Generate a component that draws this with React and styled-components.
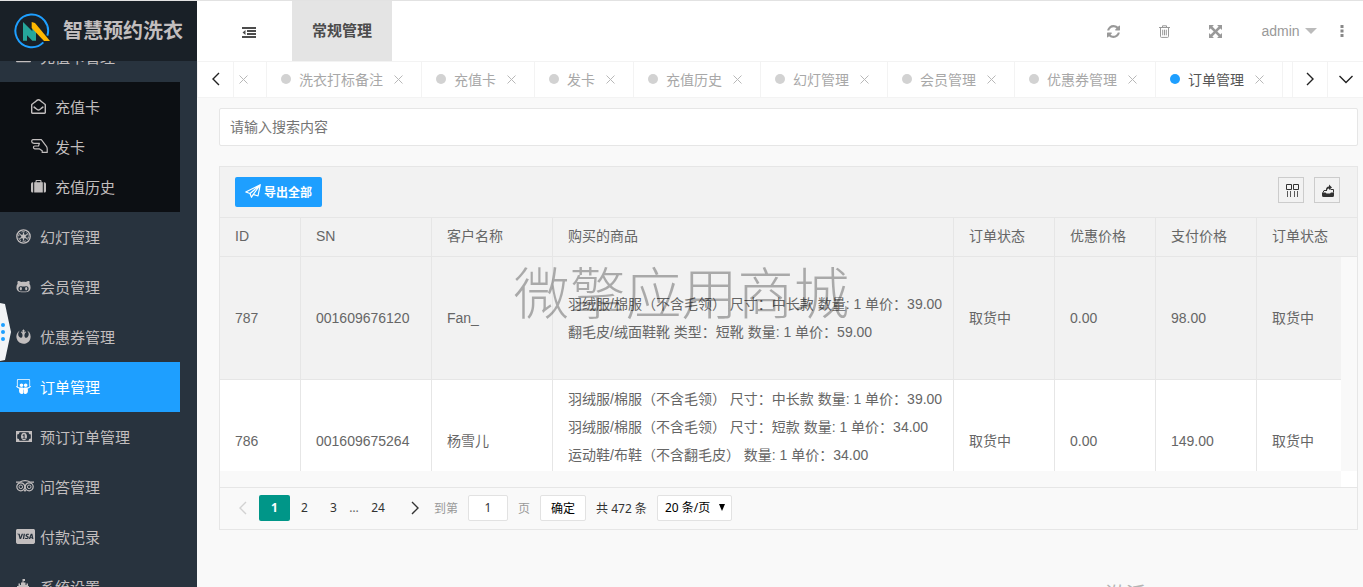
import styled, { createGlobalStyle, css } from "styled-components";
import { useEffect, useRef, useState } from "react";
import {
  FaRegEnvelopeOpen,
  FaGithubAlt,
  FaRebel,
  FaSlideshare,
  FaCcVisa,
} from "react-icons/fa";

const GlobalStyle = createGlobalStyle`
  * {
    box-sizing: border-box;
  }

  body {
    margin: 0;
    overflow: hidden;
    background: #f9f9f9;
    color: #666;
    font-family: "Liberation Sans", Arial, "Noto Sans CJK SC", sans-serif;
    font-size: 14px;
  }

  button, input, select {
    font-family: inherit;
  }

  a {
    color: inherit;
    text-decoration: none;
  }
`;

const Page = styled.div`
  position: relative;
  display: flex;
  height: 100vh;
  border-top: 1px solid #e2e2e2;
  overflow: hidden;
`;

/* Sidebar */
const Sidebar = styled.aside`
  display: flex;
  flex-direction: column;
  flex: none;
  width: 197px;
  background: #28333e;
`;

const Brand = styled.div`
  display: flex;
  align-items: center;
  flex: none;
  gap: 12px;
  height: 60px;
  padding-left: 13px;
  background: #192027;
  color: #c2bebe;
`;

const BrandName = styled.h1`
  margin: 0;
  font-size: 20px;
  line-height: 30px;
  font-weight: 700;
  white-space: nowrap;
`;

const MenuScroll = styled.nav`
  flex: 1;
  min-height: 0;
  overflow: hidden;
`;

const Menu = styled.ul`
  width: 180px;
  margin: 0;
  padding: 0;
  list-style: none;
`;

const SubMenu = styled(Menu)`
  padding: 5px 0;
  background: #0c0f13;
`;

const MenuLink = styled.a`
  display: flex;
  align-items: center;
  height: ${(p) => (p.$sub ? "40px" : "50px")};
  padding-bottom: 2px;
  padding-left: ${(p) => (p.$sub ? "31px" : "16px")};
  background: ${(p) => (p.$active ? "#1e9fff" : "transparent")};
  color: ${(p) => (p.$active ? "#fff" : "#c2bebe")};
  font-size: 15px;
  white-space: nowrap;
`;

const MenuIcon = styled.span`
  display: flex;
  flex: none;
  width: 24px;
`;

const Handle = styled.button`
  position: absolute;
  left: 0;
  top: 302px;
  width: 11px;
  height: 58px;
  padding: 0;
  border: 0;
  background: none;

  svg {
    display: block;
  }
`;

/* Right side */
const Content = styled.div`
  display: flex;
  flex-direction: column;
  flex: 1;
  min-width: 0;
`;

const Header = styled.header`
  display: flex;
  justify-content: space-between;
  flex: none;
  height: 60px;
  background: #fff;
`;

const HeaderGroup = styled.div`
  display: flex;
  align-items: center;
  padding-right: ${(p) => (p.$right ? "16px" : "0")};
`;

const FoldButton = styled.button`
  display: flex;
  align-items: center;
  justify-content: center;
  width: 95px;
  height: 60px;
  padding: 2px 0 0 8px;
  border: 0;
  background: none;
  color: #4c4c4c;
`;

const ModuleLink = styled.a`
  height: 60px;
  padding: 0 20px;
  background: #e4e4e4;
  color: #4c4c4c;
  font-size: 15px;
  line-height: 60px;
  font-weight: 700;
`;

const HeaderButton = styled.button`
  display: flex;
  align-items: center;
  justify-content: center;
  width: ${(p) => p.$width || "51px"};
  height: 60px;
  padding: 0;
  gap: 5px;
  border: 0;
  background: none;
  color: #999;
  font-size: 14px;
`;

const TabBar = styled.div`
  display: flex;
  flex: none;
  height: 37px;
  border-top: 1px solid #f3f3f3;
  border-bottom: 1px solid #f3f3f3;
  border-left: 1px solid #f3f3f3;
  background: #fff;
`;

const TabArrow = styled.button`
  display: flex;
  align-items: center;
  justify-content: center;
  flex: none;
  width: ${(p) => p.$width || "36px"};
  padding: 0 0 2px;
  border: 0;
  ${(p) => (p.$left
    ? css`border-right: 1px solid #f3f3f3;`
    : css`border-left: 1px solid #f3f3f3;`)}
  background: #fff;
  color: #222;
`;

const TabList = styled.div`
  display: flex;
  justify-content: flex-end;
  flex: 1;
  min-width: 0;
  padding-right: 9px;
  overflow: hidden;
`;

const Tab = styled.div`
  display: flex;
  align-items: center;
  flex: none;
  padding: 0 14px 2px ${(p) => (p.$cut ? "2px" : "14px")};
  border-right: 1px solid #f3f3f3;
  color: ${(p) => (p.$active ? "#555" : "#a8a8a8")};
`;

const TabDot = styled.span`
  width: 10px;
  height: 10px;
  margin-right: 8px;
  border-radius: 50%;
  background: ${(p) => (p.$active ? "#1e9fff" : "#d2d2d2")};
`;

const TabClose = styled.button`
  display: flex;
  align-items: center;
  justify-content: center;
  width: 16px;
  height: 16px;
  margin-left: ${(p) => (p.$cut ? "0" : "8px")};
  padding: 2px 1px 0 0;
  border: 0;
  background: none;
  color: #b8b8b8;
`;

const Main = styled.main`
  display: flex;
  flex-direction: column;
  flex: 1;
  gap: 20px;
  min-height: 0;
  padding: 10px 5px 57px 22px;
`;

const SearchInput = styled.input`
  flex: none;
  width: 100%;
  height: 38px;
  padding: 0 10px;
  border: 1px solid #e6e6e6;
  border-radius: 2px;
  background: #fff;
  font-size: 14px;
  outline: none;

  &::placeholder {
    color: #757575;
  }
`;

/* Table */
const TableCard = styled.section`
  display: flex;
  flex-direction: column;
  flex: 1;
  min-height: 0;
  border: 1px solid #e6e6e6;
`;

const Toolbar = styled.div`
  display: flex;
  align-items: flex-start;
  justify-content: space-between;
  flex: none;
  height: 51px;
  padding: 10px 17px 10px 15px;
  border-bottom: 1px solid #e6e6e6;
  background: #f2f2f2;
`;

const ExportButton = styled.button`
  display: flex;
  align-items: center;
  gap: 3px;
  height: 30px;
  padding: 0 10px 2px;
  border: 0;
  border-radius: 2px;
  background: #1e9fff;
  color: #fff;
  font-size: 12px;
  font-weight: 700;
`;

const ToolGroup = styled.div`
  display: flex;
  gap: 10px;
`;

const ToolButton = styled.button`
  display: flex;
  align-items: center;
  justify-content: center;
  width: 26px;
  height: 26px;
  padding: 2px 0 0 2px;
  border: 1px solid #ccc;
  background: none;
  color: #333;
`;

const DataTable = styled.table`
  width: 100%;
  border-collapse: separate;
  border-spacing: 0;
  table-layout: fixed;
`;

const HeadCell = styled.th`
  height: 39px;
  padding: 0 15px 2px;
  border-right: 1px solid #e6e6e6;
  border-bottom: 1px solid #e6e6e6;
  background: #f2f2f2;
  font-weight: 400;
  line-height: 20px;
  text-align: left;
  white-space: nowrap;

  &:last-child {
    border-right: 0;
  }
`;

const Cell = styled.td`
  height: 123px;
  padding: 5px 0 5px 15px;
  border-right: 1px solid #e6e6e6;
  border-bottom: 1px solid #e6e6e6;
  background: ${(p) => (p.$hover ? "#f2f2f2" : "#fff")};
  line-height: 28px;
  white-space: nowrap;

  &:last-child {
    border-right: 0;
  }
`;

const ProductLine = styled.div`
  height: 28px;
`;

const TableBody = styled.div`
  display: grid;
  grid-template-columns: 1fr 16px;
  grid-template-rows: 1fr 16px;
  flex: 1;
  min-height: 0;
`;

const TableViewport = styled.div`
  min-height: 0;
  overflow: hidden;
`;

const ScrollCorner = styled.div`
  grid-column: 2;
  grid-row: 2;
  background: #fff;
`;

const Pager = styled.div`
  display: flex;
  align-items: center;
  flex: none;
  height: 42px;
  padding-bottom: 2px;
  padding-left: 7px;
  border-top: 1px solid #e6e6e6;
  color: #333;
  font-family: "Noto Sans", "Noto Sans CJK SC", sans-serif;
  font-size: 12px;
`;

const PageButton = styled.button`
  display: flex;
  align-items: center;
  justify-content: center;
  width: ${(p) => p.$width || "29px"};
  height: 26px;
  padding: 0;
  border: 0;
  border-radius: 2px;
  background: ${(p) => (p.$active ? "#009688" : "none")};
  color: ${(p) => (p.$active ? "#fff" : p.disabled ? "#d2d2d2" : "#333")};
  font-size: 12px;
  font-weight: ${(p) => (p.$active ? 700 : 400)};
`;

const Ellipsis = styled.span`
  width: 12px;
  color: #666;
  text-align: center;
`;

const JumpLabel = styled.label`
  display: flex;
  align-items: center;
  gap: 10px;
  color: #999;
`;

const JumpInput = styled.input`
  width: 40px;
  height: 26px;
  padding: 0;
  border: 1px solid #e2e2e2;
  border-radius: 2px;
  background: #fff;
  color: #333;
  font-size: 12px;
  text-align: center;
`;

const ConfirmButton = styled.button`
  width: 46px;
  height: 26px;
  margin: 0 10px;
  padding: 0;
  border: 1px solid #e2e2e2;
  border-radius: 2px;
  background: #fff;
  color: #000;
  font-size: 12px;
`;

const LimitBox = styled.div`
  display: flex;
  align-items: center;
  justify-content: space-between;
  width: 75px;
  height: 26px;
  margin-left: 10px;
  padding-right: 6px;
  border: 1px solid #e2e2e2;
  border-radius: 2px;
  background: #fff;
  color: #000;
`;

const LimitSelect = styled.select`
  width: 56px;
  height: 24px;
  padding: 0 0 0 7px;
  border: 0;
  appearance: none;
  background: none;
  color: #000;
  font-size: 12px;
  outline: none;
`;

/* Overlays */
const Watermark = styled.div`
  position: absolute;
  inset: 0;
  display: flex;
  align-items: center;
  justify-content: center;
  padding-bottom: 10px;
  color: rgba(0, 0, 0, 0.3);
  font-family: "Noto Sans CJK SC", sans-serif;
  font-size: 56px;
  font-weight: 300;
  white-space: nowrap;
  pointer-events: none;
`;

const SystemNotice = styled.div`
  position: absolute;
  right: 127px;
  bottom: -23px;
  color: #b4b4b4;
  font-family: "Open Sans", "Noto Sans CJK SC", sans-serif;
  font-size: 20px;
  line-height: 30px;
  white-space: nowrap;
  pointer-events: none;
`;

//////////////////////////////////////////////////////
const Logo = () => (
  <svg width="38" height="37" viewBox="39 39 114 111">
    <path d="M142 107A49 49 0 1 0 130 127" fill="none" stroke="#1e9fff" strokeWidth="6" />
    <path d="M69 66L97 94V84L108 94V122H97L81 106V122H69Z" fill="#26a69a" />
    <path d="M95 66L105 69L150 123H132L95 84Z" fill="#ffb800" />
  </svg>
);

const Chevron = ({ dir, size = 14 }) => {
  const paths = {
    left: "M10 1L4 7L10 13",
    right: "M4 1L10 7L4 13",
    down: "M0.500 4L7 10.500L13.500 4",
  };
  return (
    <svg width={size} height={size} viewBox="0 0 14 14" fill="none" stroke="currentColor" strokeWidth="1.400">
      <path d={paths[dir]} />
    </svg>
  );
};

const OutdentIcon = () => (
  <svg width="14" height="11" viewBox="0 0 14 11" fill="currentColor">
    <path d="M0 0H14V2H0ZM5 3H14V5H5ZM5 6H14V8H5ZM0 9H14V11H0ZM0.500 5.500L3.500 3V8Z" />
  </svg>
);

const HandIcon = () => (
  <svg width="17" height="14" viewBox="0 0 17 14" fill="none" stroke="currentColor" strokeWidth="1.200" strokeLinejoin="round">
    <path d="M16.200 13.400H11.200V11.800L8.200 9.800H3.800Q2.400 9.600 2.400 8.300T3.800 7H7.500L8.400 4.300H3Q0.700 4 0.700 2.400Q0.700 0.700 2 0.700H10.300L15.600 7.700Q16.200 8.600 16.200 10Z" />
  </svg>
);

const SuitcaseIcon = () => (
  <svg width="15" height="13" viewBox="0 0 15 13" fill="currentColor">
    <path d="M0 4Q0 2.300 1.600 2.300H2.200V12.500H1.600Q0 12.500 0 11ZM12.800 2.300H13.400Q15 2.300 15 4V11Q15 12.500 13.400 12.500H12.800Z" />
    <path fillRule="evenodd" d="M3.200 2.300H4.500V1Q4.500 0 5.500 0H9.500Q10.500 0 10.500 1V2.300H11.800V12.500H3.200ZM5.600 2.300H9.400V1.100H5.600Z" />
  </svg>
);

const OrderIcon = () => (
  <svg width="15" height="15" viewBox="0 0 15 15" fill="none" stroke="currentColor">
    <circle cx="7.500" cy="7.500" r="6.700" strokeWidth="1.300" />
    <circle cx="7.500" cy="7.500" r="4.900" strokeWidth="1" strokeDasharray="3.400 1.700" />
    <circle cx="7.500" cy="7.500" r="1.800" fill="currentColor" />
    <path d="M7.500 3.500V11.500M4 5.500L11 9.500M11 5.500L4 9.500" strokeWidth="1.200" />
  </svg>
);

const TowerIcon = () => (
  <svg width="14" height="14" viewBox="0 0 14 14" fill="currentColor">
    <path d="M6.500 0H9V2H7.500V3.500H9.500V6H10.500V4.500H12V7H13V14H1V7H2.500V4.500H4V6H5V3.500H6.500Z" />
  </svg>
);

const MoneyIcon = () => (
  <svg width="16" height="11" viewBox="0 0 16 11" fill="currentColor">
    <path fillRule="evenodd" d="M0 0H16V11H0ZM3.500 1.200A2.300 2.300 0 0 1 1.200 3.500V7.500A2.300 2.300 0 0 1 3.500 9.800H12.500A2.300 2.300 0 0 1 14.800 7.500V3.500A2.300 2.300 0 0 1 12.500 1.200Z" />
    <path fillRule="evenodd" d="M8 1.800C9.800 1.800 11 3.500 11 5.500S9.800 9.200 8 9.200S5 7.500 5 5.500S6.200 1.800 8 1.800ZM6.600 7.700H9.600V6.900H8.600V3.200H7.700L6.500 4.300L7 4.900L7.600 4.400V6.900H6.600Z" />
  </svg>
);

const OwlIcon = () => (
  <svg width="18" height="12" viewBox="0 0 18 12" fill="none" stroke="currentColor">
    <circle cx="4.800" cy="6.800" r="4" strokeWidth="1.200" />
    <circle cx="13.200" cy="6.800" r="4" strokeWidth="1.200" />
    <circle cx="4.800" cy="6.800" r="1.800" strokeWidth="1" />
    <circle cx="13.200" cy="6.800" r="1.800" strokeWidth="1" />
    <path d="M0 2.200H3.500C7 0.300 11 0.300 14.500 2.200H18M7.800 9.500L9 11L10.200 9.500" strokeWidth="1.200" />
  </svg>
);

const RefreshIcon = () => (
  <svg width="13" height="13" viewBox="0 0 1536 1536" fill="currentColor">
    <path d="M1511 928q0 5-1 7-64 268-268 434.500T764 1536q-146 0-282.500-55T238 1324l-129 129q-19 19-45 19t-45-19-19-45V960q0-26 19-45t45-19h448q26 0 45 19t19 45-19 45l-137 137q71 66 161 102t187 36q134 0 250-65t186-179q11-17 53-117 8-23 30-23h192q13 0 22.500 9.500t9.500 22.500zm25-800v448q0 26-19 45t-45 19h-448q-26 0-45-19t-19-45 19-45l138-138Q969 256 768 256q-134 0-250 65T332 500q-11 17-53 117-8 23-30 23H50q-13 0-22.500-9.500T18 608v-7q65-268 270-434.500T768 0q146 0 284 55.500T1297 212l130-129q19-19 45-19t45 19 19 45z" />
  </svg>
);

const TrashIcon = () => (
  <svg width="11" height="13" viewBox="0 0 11 13" fill="none" stroke="currentColor">
    <path d="M0 2.500H11M3.500 2.500V0.800H7.500V2.500M1.500 2.500V11.500Q1.500 12.400 2.400 12.400H8.600Q9.500 12.400 9.500 11.500V2.500M3.700 4.700V10.300M5.500 4.700V10.300M7.300 4.700V10.300" />
  </svg>
);

const ExpandIcon = () => (
  <svg width="13" height="13" viewBox="0 0 13 13" fill="currentColor">
    <path d="M0 0H5L3.400 1.600L6.500 4.700L9.600 1.600L8 0H13V5L11.400 3.400L8.300 6.500L11.400 9.600L13 8V13H8L9.600 11.400L6.500 8.300L3.400 11.400L5 13H0V8L1.600 9.600L4.700 6.500L1.600 3.400L0 5Z" />
  </svg>
);

const PlaneIcon = () => (
  <svg width="16" height="14" viewBox="0 0 16 14" fill="none" stroke="currentColor" strokeWidth="1.200" strokeLinejoin="round">
    <path d="M15.300 0.700L0.800 8L5 9.500L15.300 0.700L13 12L8.300 10.400L15.300 0.700M5 9.500L6.500 13.300L8.300 10.400" />
  </svg>
);

const ColumnsIcon = () => (
  <svg width="14" height="14" viewBox="0 0 14 14" fill="none" stroke="currentColor">
    <path d="M1.500 0.500H6.500V5.500H1.500ZM8.500 0.500H13.500V5.500H8.500Z" />
    <path d="M2.500 7V13M5.500 7V13M9.500 7V13M12.500 7V13" strokeOpacity="0.800" />
  </svg>
);

const ShareIcon = () => (
  <svg width="14" height="14" viewBox="0 0 14 14" fill="currentColor">
    <path d="M1 8.500H4.500L5.500 9.500H9L10 8.500H13V11.500Q13 13 11.500 13H2.500Q1 13 1 11.500Z" />
    <path d="M5 6.500H3L2 8.500M9.500 5.500H12.500V8.500" fill="none" stroke="currentColor" />
    <path d="M5 7C4.500 4 6 2.500 8 2.500V0.500L11 3.500L8 6V4.500C6.500 4.500 6 5.500 6 7Z" />
  </svg>
);

const CloseIcon = () => (
  <svg width="9" height="9" viewBox="0 0 9 9" stroke="currentColor">
    <path d="M0.500 0.500L8.500 8.500M8.500 0.500L0.500 8.500" />
  </svg>
);

const subMenu = [
  { name: "充值卡", icon: <FaRegEnvelopeOpen size={15} /> },
  { name: "发卡", icon: <HandIcon /> },
  { name: "充值历史", icon: <SuitcaseIcon /> },
];

const menu = [
  { name: "幻灯管理", icon: <OrderIcon /> },
  { name: "会员管理", icon: <FaGithubAlt size={15} /> },
  { name: "优惠券管理", icon: <FaRebel size={15} /> },
  { name: "订单管理", icon: <FaSlideshare size={15} /> },
  { name: "预订订单管理", icon: <MoneyIcon /> },
  { name: "问答管理", icon: <OwlIcon /> },
  { name: "付款记录", icon: <FaCcVisa size={19} /> },
  { name: "系统设置", icon: <TowerIcon /> },
];

const tabs = ["洗衣打标备注", "充值卡", "发卡", "充值历史", "幻灯管理", "会员管理", "优惠券管理", "订单管理"];

const columns = [
  { title: "ID", width: 81 },
  { title: "SN", width: 131 },
  { title: "客户名称", width: 121 },
  { title: "购买的商品", width: 401 },
  { title: "订单状态", width: 101 },
  { title: "优惠价格", width: 101 },
  { title: "支付价格", width: 101 },
  { title: "订单状态" },
];

const orders = [
  {
    id: 787,
    sn: "001609676120",
    customer: "Fan_",
    products: [
      "羽绒服/棉服（不含毛领） 尺寸：中长款 数量: 1 单价：39.00",
      "翻毛皮/绒面鞋靴 类型：短靴 数量: 1 单价：59.00",
    ],
    status: "取货中",
    discount: "0.00",
    paid: "98.00",
  },
  {
    id: 786,
    sn: "001609675264",
    customer: "杨雪儿",
    products: [
      "羽绒服/棉服（不含毛领） 尺寸：中长款 数量: 1 单价：39.00",
      "羽绒服/棉服（不含毛领） 尺寸：短款 数量: 1 单价：34.00",
      "运动鞋/布鞋（不含翻毛皮） 数量: 1 单价：34.00",
      "",
    ],
    status: "取货中",
    discount: "0.00",
    paid: "149.00",
  },
];

const Columns = () => (
  <colgroup>
    {columns.map((col, i) => (
      <col key={i} width={col.width} />
    ))}
  </colgroup>
);

const SideMenu = () => {
  const scrollRef = useRef(null);

  useEffect(() => {
    scrollRef.current.scrollTop = 29;
  }, []);

  return (
    <Sidebar>
      <Brand>
        <Logo />
        <BrandName>智慧预约洗衣</BrandName>
      </Brand>
      <MenuScroll ref={scrollRef}>
        <Menu>
          <li>
            <MenuLink href="#">
              <MenuIcon><FaCcVisa size={15} /></MenuIcon>
              充值卡管理
            </MenuLink>
            <SubMenu>
              {subMenu.map((item) => (
                <li key={item.name}>
                  <MenuLink href="#" $sub>
                    <MenuIcon>{item.icon}</MenuIcon>
                    {item.name}
                  </MenuLink>
                </li>
              ))}
            </SubMenu>
          </li>
          {menu.map((item) => (
            <li key={item.name}>
              <MenuLink href="#" $active={item.name === "订单管理"}>
                <MenuIcon>{item.icon}</MenuIcon>
                {item.name}
              </MenuLink>
            </li>
          ))}
        </Menu>
      </MenuScroll>
    </Sidebar>
  );
};

const OrderTable = () => {
  const [page, setPage] = useState("1");

  return (
    <TableCard>
      <Toolbar>
        <ExportButton>
          <PlaneIcon />
          导出全部
        </ExportButton>
        <ToolGroup>
          <ToolButton aria-label="筛选列"><ColumnsIcon /></ToolButton>
          <ToolButton aria-label="导出"><ShareIcon /></ToolButton>
        </ToolGroup>
      </Toolbar>
      <DataTable>
        <Columns />
        <thead>
          <tr>
            {columns.map((col, i) => (
              <HeadCell key={i}>{col.title}</HeadCell>
            ))}
          </tr>
        </thead>
      </DataTable>
      <TableBody>
        <TableViewport>
          <DataTable>
            <Columns />
            <tbody>
              {orders.map((order, i) => (
                <tr key={order.id}>
                  <Cell $hover={i === 0}>{order.id}</Cell>
                  <Cell $hover={i === 0}>{order.sn}</Cell>
                  <Cell $hover={i === 0}>{order.customer}</Cell>
                  <Cell $hover={i === 0}>
                    {order.products.map((line, n) => (
                      <ProductLine key={n}>{line}</ProductLine>
                    ))}
                  </Cell>
                  <Cell $hover={i === 0}>{order.status}</Cell>
                  <Cell $hover={i === 0}>{order.discount}</Cell>
                  <Cell $hover={i === 0}>{order.paid}</Cell>
                  <Cell $hover={i === 0}>{order.status}</Cell>
                </tr>
              ))}
            </tbody>
          </DataTable>
        </TableViewport>
        <ScrollCorner />
      </TableBody>
      <Pager>
        <PageButton $width="32px" disabled aria-label="上一页"><Chevron dir="left" /></PageButton>
        <PageButton $width="31px" $active>1</PageButton>
        <PageButton>2</PageButton>
        <PageButton>3</PageButton>
        <Ellipsis>…</Ellipsis>
        <PageButton $width="36px">24</PageButton>
        <PageButton $width="38px" aria-label="下一页"><Chevron dir="right" /></PageButton>
        <JumpLabel>
          到第
          <JumpInput value={page} onChange={(e) => setPage(e.target.value)} />
          页
        </JumpLabel>
        <ConfirmButton>确定</ConfirmButton>
        <span>共 472 条</span>
        <LimitBox>
          <LimitSelect aria-label="每页条数">
            <option>20 条/页</option>
          </LimitSelect>
          <svg width="6" height="7" viewBox="0 0 6 7"><path d="M0 0H6L3 7Z" /></svg>
        </LimitBox>
      </Pager>
    </TableCard>
  );
};

const App = () => (
  <>
    <GlobalStyle />
    <Page>
      <SideMenu />
      <Content>
        <Header>
          <HeaderGroup>
            <FoldButton aria-label="收起菜单"><OutdentIcon /></FoldButton>
            <ModuleLink href="#">常规管理</ModuleLink>
          </HeaderGroup>
          <HeaderGroup $right>
            <HeaderButton aria-label="刷新"><RefreshIcon /></HeaderButton>
            <HeaderButton aria-label="清理缓存"><TrashIcon /></HeaderButton>
            <HeaderButton aria-label="全屏"><ExpandIcon /></HeaderButton>
            <HeaderButton $width="96px">
              admin
              <svg width="12" height="6" viewBox="0 0 12 6"><path d="M0 0H12L6 6Z" fill="#bbb" /></svg>
            </HeaderButton>
            <HeaderButton $width="10px" aria-label="更多">
              <svg width="4" height="12" viewBox="0 0 4 12" fill="#888">
                <path d="M0.500 0H3.500V3H0.500ZM0.500 4.500H3.500V7.500H0.500ZM0.500 9H3.500V12H0.500Z" />
              </svg>
            </HeaderButton>
          </HeaderGroup>
        </Header>
        <TabBar>
          <TabArrow $left aria-label="向左"><Chevron dir="left" /></TabArrow>
          <TabList>
            <Tab $cut>
              <TabClose $cut aria-label="关闭"><CloseIcon /></TabClose>
            </Tab>
            {tabs.map((name) => (
              <Tab key={name} $active={name === "订单管理"}>
                <TabDot $active={name === "订单管理"} />
                {name}
                <TabClose aria-label="关闭"><CloseIcon /></TabClose>
              </Tab>
            ))}
          </TabList>
          <TabArrow $width="35px" aria-label="向右"><Chevron dir="right" /></TabArrow>
          <TabArrow aria-label="展开"><Chevron dir="down" /></TabArrow>
        </TabBar>
        <Main>
          <SearchInput type="text" placeholder="请输入搜索内容" aria-label="搜索" />
          <OrderTable />
        </Main>
      </Content>
      <Handle aria-label="收起侧栏">
        <svg width="11" height="58" viewBox="0 0 11 58">
          <path d="M0 0L5 1L11 29L5 57L0 58Z" fill="#f2f4f6" />
          <g fill="#1e9fff">
            <circle cx="3" cy="22" r="2" />
            <circle cx="3" cy="29" r="2" />
            <circle cx="3" cy="36" r="2" />
          </g>
        </svg>
      </Handle>
      <Watermark>微擎应用商城</Watermark>
      <SystemNotice>激活 Windows</SystemNotice>
    </Page>
  </>
);

export default App;
